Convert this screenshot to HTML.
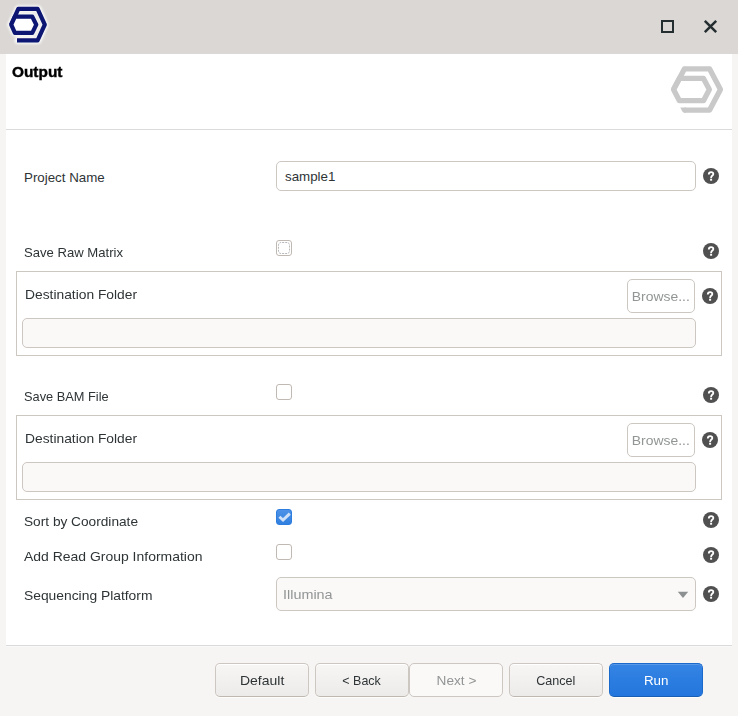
<!DOCTYPE html>
<html>
<head>
<meta charset="utf-8">
<title>Output</title>
<style>
html,body{margin:0;padding:0;}
body{width:738px;height:716px;background:#f6f5f4;position:relative;overflow:hidden;
  font-family:"Liberation Sans",sans-serif;font-size:13.33px;color:#2e3436;}
.abs{position:absolute;}
#titlebar{left:0;top:0;width:738px;height:54px;background:#dad7d4;}
#page{left:6px;top:54px;width:726px;height:591px;background:#ffffff;}
#hsep{left:6px;top:129px;width:726px;height:1px;background:#dbdbdb;}
#bsep{left:6px;top:645px;width:726px;height:1px;background:#dadada;box-shadow:0 1px 0 #faf9f9;}
.lbl{position:absolute;white-space:nowrap;line-height:16px;height:16px;color:#2e3436;}
.entry{position:absolute;box-sizing:border-box;border:1px solid #cdc7c2;border-radius:5px;background:#fff;}
.entry.dis{background:#faf9f8;}
.group{position:absolute;box-sizing:border-box;border:1px solid #cdc7c2;background:#fff;left:16px;width:706px;height:85px;}
.btn{position:absolute;box-sizing:border-box;border:1px solid #cdc7c2;border-radius:5px;height:34px;
  background:linear-gradient(#f7f6f5,#edebe9);border-bottom-color:#bfb8b1;box-shadow:inset 0 1px #ffffff,0 1px 0 rgba(255,255,255,0.75);text-align:center;line-height:34px;white-space:nowrap;color:#2e3436;}
.btn.dis{background:#faf9f8;color:#929595;border-bottom-color:#cdc7c2;box-shadow:none;}
.btn.blue{border-color:#1b6acb;border-bottom-color:#185fb4;background:linear-gradient(#3584e4,#2376dd);color:#fff;box-shadow:inset 0 1px rgba(255,255,255,0.18),0 1px 0 rgba(255,255,255,0.75);}
.btn.flat{background:#fff;color:#929595;border-bottom-color:#cdc7c2;box-shadow:none;}
.cb{position:absolute;box-sizing:border-box;width:16px;height:16px;left:276px;border:1px solid #c0b9b3;border-radius:3px;background:#fff;}
.cb.on{border-color:#2d7de0;background:linear-gradient(#4d92e7,#3080e0);}
.help{position:absolute;width:16px;height:16px;}
.sx{display:inline-block;transform-origin:0 50%;}
.btn .sx{transform-origin:50% 50%;}
</style>
</head>
<body>
<div id="titlebar" class="abs"></div>
<div id="page" class="abs"></div>
<div id="hsep" class="abs"></div>
<div id="bsep" class="abs"></div>

<!-- window icon -->
<svg class="abs" style="left:0px;top:0px" width="56" height="50" viewBox="0 0 56 50">
  <defs>
    <filter id="blh" x="-20%" y="-20%" width="140%" height="140%"><feGaussianBlur stdDeviation="1.0"/></filter>
    <filter id="bli" x="-20%" y="-20%" width="140%" height="140%"><feGaussianBlur stdDeviation="0.7"/></filter>
  </defs>
  <g fill="none" stroke="#ffffff" stroke-width="7" stroke-linejoin="round" stroke-linecap="round" opacity="0.85" filter="url(#blh)">
    <path d="M11 24.7 L18.3 8.7 H38 L45 24.6 L38 40.5 H18"/>
    <path d="M11 24.7 L14.9 16.5 H32.5 L36.5 24.7 L32.5 33 H14.9 Z" fill="#ffffff"/>
  </g>
  <g fill="none" stroke="#0a1572" stroke-width="4.2" stroke-linejoin="round" filter="url(#bli)">
    <path d="M11.2 24.7 L18.3 8.9 H37.6 L44.8 24.6 L37.6 40.3 H17"/>
    <path d="M11.2 24.7 L14.9 16.7 H32.3 L36.3 24.7 L32.3 32.9 H14.9 Z" fill="#ffffff"/>
  </g>
</svg>

<!-- window controls -->
<svg class="abs" style="left:661px;top:20px" width="13" height="13" viewBox="0 0 13 13"><rect x="1" y="1" width="11" height="11" fill="none" stroke="#242e31" stroke-width="2"/></svg>
<svg class="abs" style="left:703px;top:19px" width="15" height="15" viewBox="0 0 15 15"><path d="M1.8 1.8 L13.2 13.2 M13.2 1.8 L1.8 13.2" fill="none" stroke="#242e31" stroke-width="2.5"/></svg>

<!-- header -->
<div class="lbl" id="t_output" style="left:12px;top:64px;font-weight:bold;color:#000;font-size:14.67px;-webkit-text-stroke:0.4px #000;"><span class="sx" style="transform:scaleX(1.05)">Output</span></div>
<svg class="abs" style="left:668px;top:64px" width="58" height="52" viewBox="0 0 58 52">
  <g fill="none" stroke="#c9c9c9" stroke-width="5.3" stroke-linejoin="round" stroke-linecap="butt">
    <path d="M5.55 25.5 L16.35 4.9 H41.65 L52.45 25.5 L41.65 46.1 H16.4"/>
    <path d="M5.55 25.5 L11.4 14.4 H35.5 L41.35 25.5 L35.5 36.7 H11.4 Z"/>
  </g>
  <path d="M12.3 43.45 H18 V48.75 H16.2 Q14.8 48.6 14.2 47.2 Z" fill="#c9c9c9"/>
</svg>

<!-- Project name -->
<div class="lbl" id="l1" style="left:24px;top:170px;"><span class="sx" style="transform:scaleX(1.0000)">Project Name</span></div>
<div class="entry" style="left:276px;top:161px;width:420px;height:30px;"></div>
<div class="lbl" id="v1" style="left:285px;top:169px;"><span class="sx" style="transform:scaleX(1.0000)">sample1</span></div>

<!-- Save raw matrix -->
<div class="lbl" id="l2" style="left:24px;top:245px;"><span class="sx" style="transform:scaleX(0.9832)">Save Raw Matrix</span></div>
<div class="cb" style="top:240px;"><svg class="abs" style="left:-1px;top:-1px" width="16" height="16" viewBox="0 0 16 16"><rect x="2.5" y="2.5" width="11" height="11" rx="2.5" fill="none" stroke="#7d7d7d" stroke-opacity="0.55" stroke-width="1" stroke-dasharray="2 1.05" stroke-dashoffset="-1.2"/></svg></div>
<div class="group" style="top:271px;"></div>
<div class="lbl" id="l3" style="left:25px;top:287px;"><span class="sx" style="transform:scaleX(1.0360)">Destination Folder</span></div>
<div class="btn flat" id="b_br1" style="left:627px;top:279px;width:68px;"><span class="sx" style="transform:scaleX(1.0444)">Browse...</span></div>
<div class="entry dis" style="left:22px;top:318px;width:674px;height:30px;"></div>

<!-- Save BAM -->
<div class="lbl" id="l4" style="left:24px;top:389px;"><span class="sx" style="transform:scaleX(0.9602)">Save BAM File</span></div>
<div class="cb" style="top:384px;"></div>
<div class="group" style="top:415px;"></div>
<div class="lbl" id="l5" style="left:25px;top:431px;"><span class="sx" style="transform:scaleX(1.0360)">Destination Folder</span></div>
<div class="btn flat" id="b_br2" style="left:627px;top:423px;width:68px;"><span class="sx" style="transform:scaleX(1.0444)">Browse...</span></div>
<div class="entry dis" style="left:22px;top:462px;width:674px;height:30px;"></div>

<!-- Sort by coordinate -->
<div class="lbl" id="l6" style="left:24px;top:514px;"><span class="sx" style="transform:scaleX(1.0261)">Sort by Coordinate</span></div>
<div class="cb on" style="top:509px;">
  <svg class="abs" style="left:-1px;top:-1px" width="16" height="16" viewBox="0 0 16 16"><path d="M3.4 7.8 L7 11.1 L13.8 4.6" fill="none" stroke="#cfe1f8" stroke-width="2.9"/></svg>
</div>

<div class="lbl" id="l7" style="left:24px;top:549px;"><span class="sx" style="transform:scaleX(1.0471)">Add Read Group Information</span></div>
<div class="cb" style="top:544px;"></div>

<div class="lbl" id="l8" style="left:24px;top:588px;"><span class="sx" style="transform:scaleX(1.0379)">Sequencing Platform</span></div>
<div class="entry dis" style="left:276px;top:577px;width:420px;height:34px;"></div>
<div class="lbl" id="v2" style="left:283px;top:587px;color:#929595;"><span class="sx" style="transform:scaleX(1.0800)">Illumina</span></div>
<svg class="abs" style="left:677px;top:591px" width="12" height="8" viewBox="0 0 12 8"><path d="M0.8 0.8 H11.2 L6 7 Z" fill="#8d9091"/></svg>

<!-- help icons -->
<svg width="0" height="0" style="position:absolute"><defs>
  <g id="hq"><circle cx="8" cy="8" r="8" fill="#505050"/>
  <path d="M5.8 6.5 C5.8 4.8 6.8 4.1 8.1 4.1 C9.5 4.1 10.3 4.8 10.3 5.9 C10.3 7.5 8.1 7.6 8.1 9.9" fill="none" stroke="#fff" stroke-width="1.8"/>
  <rect x="7.1" y="10.7" width="2" height="2" fill="#fff"/></g>
</defs></svg>
<svg class="help" style="left:703px;top:168px" viewBox="0 0 16 16"><use href="#hq"/></svg>
<svg class="help" style="left:703px;top:243px" viewBox="0 0 16 16"><use href="#hq"/></svg>
<svg class="help" style="left:702px;top:288px" viewBox="0 0 16 16"><use href="#hq"/></svg>
<svg class="help" style="left:703px;top:387px" viewBox="0 0 16 16"><use href="#hq"/></svg>
<svg class="help" style="left:702px;top:432px" viewBox="0 0 16 16"><use href="#hq"/></svg>
<svg class="help" style="left:703px;top:512px" viewBox="0 0 16 16"><use href="#hq"/></svg>
<svg class="help" style="left:703px;top:547px" viewBox="0 0 16 16"><use href="#hq"/></svg>
<svg class="help" style="left:703px;top:586px" viewBox="0 0 16 16"><use href="#hq"/></svg>

<!-- buttons -->
<div class="btn" id="b1" style="left:215px;top:663px;width:94px;"><span class="sx" style="transform:scaleX(1.0512)">Default</span></div>
<div class="btn" id="b2" style="left:315px;top:663px;width:94px;"><span class="sx" style="transform:scaleX(0.9357)">&lt; Back</span></div>
<div class="btn dis" id="b3" style="left:409px;top:663px;width:94px;"><span class="sx" style="transform:scaleX(1.0237)">Next &gt;</span></div>
<div class="btn" id="b4" style="left:509px;top:663px;width:94px;"><span class="sx" style="transform:scaleX(0.9429)">Cancel</span></div>
<div class="btn blue" id="b5" style="left:609px;top:663px;width:94px;"><span class="sx" style="transform:scaleX(1.0043)">Run</span></div>
</body>
</html>
